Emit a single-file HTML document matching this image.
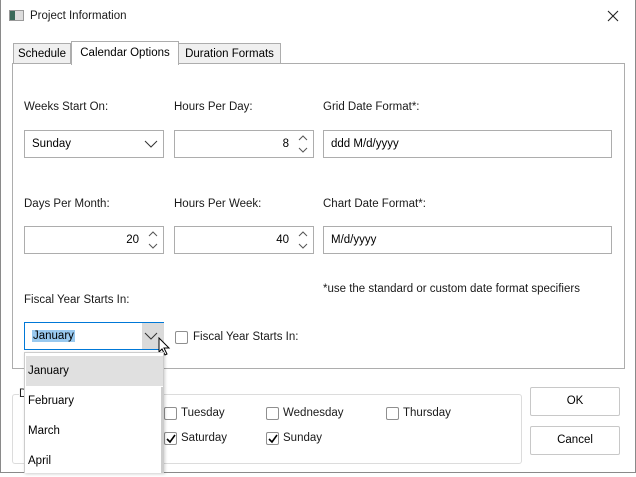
<!DOCTYPE html>
<html><head><style>
*{box-sizing:border-box;margin:0;padding:0}
body{width:636px;height:473px;background:#fff;font-family:"Liberation Sans",sans-serif;font-size:11.5px;color:#000;position:relative;overflow:hidden}
.a{position:absolute}
.win{left:0;top:0;width:636px;height:473px;border:1px solid #8a8a8a;border-top:none}
.lbl{position:absolute;font-size:11.5px;color:#1a1a1a}
.box{position:absolute;border:1px solid #adadad;background:#fff;height:28px}
.chk{position:absolute;width:13px;height:13px;border:1px solid #8f8f8f;border-radius:2px;background:#fff}
.btn{position:absolute;border:1px solid #c8c8c8;border-radius:2px;background:#fff;text-align:center;line-height:27px;font-size:11.5px}
.tab{position:absolute;border:1px solid #adadad;background:#f0f0f0;height:21px;top:43px;font-size:11.5px;text-align:center;line-height:20px}
.item{position:absolute;left:1px;width:137px;height:30px;line-height:31px;padding-left:2px}
</style></head><body>
<div class="a win"></div>
<div class="a" style="left:9px;top:10px;width:15px;height:11px;border:1px solid #999;background:linear-gradient(90deg,#3a6a5a 0 5px,#ddd 5px)"></div>
<div class="lbl" style="left:30px;top:10px">Project Information</div>
<svg class="a" style="left:607px;top:10px" width="12" height="12"><path d="M1 1L11 11M11 1L1 11" stroke="#222" stroke-width="1.1"/></svg>

<div class="a" style="left:12px;top:63px;width:613px;height:306px;border:1px solid #adadad"></div>
<div class="tab" style="left:13px;width:58px">Schedule</div>
<div class="tab" style="left:178px;width:103px">Duration Formats</div>
<div class="tab" style="left:71px;width:108px;top:41px;height:24px;background:#fff;border-bottom:none;line-height:23px">Calendar Options</div>

<div class="lbl" style="left:24px;top:101px">Weeks Start On:</div>
<div class="lbl" style="left:174px;top:101px">Hours Per Day:</div>
<div class="lbl" style="left:323px;top:101px">Grid Date Format*:</div>
<div class="box" style="left:24px;top:130px;width:140px"><span class="a" style="left:7px;top:7px">Sunday</span>
<svg class="a" style="left:119px;top:9px" width="14" height="9"><path d="M1 1L7 7L13 1" stroke="#333" fill="none"/></svg></div>
<div class="box" style="left:174px;top:130px;width:140px"><span class="a" style="right:24px;top:7px">8</span>
<svg class="a" style="left:123px;top:3px" width="10" height="20"><path d="M1 6L5 2L9 6M1 14L5 18L9 14" stroke="#555" fill="none"/></svg></div>
<div class="box" style="left:323px;top:130px;width:289px"><span class="a" style="left:7px;top:7px">ddd M/d/yyyy</span></div>

<div class="lbl" style="left:24px;top:198px">Days Per Month:</div>
<div class="lbl" style="left:174px;top:198px">Hours Per Week:</div>
<div class="lbl" style="left:323px;top:198px">Chart Date Format*:</div>
<div class="box" style="left:24px;top:226px;width:140px"><span class="a" style="right:24px;top:7px">20</span>
<svg class="a" style="left:123px;top:3px" width="10" height="20"><path d="M1 6L5 2L9 6M1 14L5 18L9 14" stroke="#555" fill="none"/></svg></div>
<div class="box" style="left:174px;top:226px;width:140px"><span class="a" style="right:24px;top:7px">40</span>
<svg class="a" style="left:123px;top:3px" width="10" height="20"><path d="M1 6L5 2L9 6M1 14L5 18L9 14" stroke="#555" fill="none"/></svg></div>
<div class="box" style="left:323px;top:226px;width:289px"><span class="a" style="left:7px;top:7px">M/d/yyyy</span></div>

<div class="lbl" style="left:323px;top:283px">*use the standard or custom date format specifiers</div>
<div class="lbl" style="left:24px;top:294px">Fiscal Year Starts In:</div>
<div class="box" style="left:24px;top:322px;width:140px;border-color:#0078d7"><span class="a" style="left:7px;top:7px;background:#99c9ef;padding:0 1px">January</span>
<div class="a" style="left:117px;top:0;width:22px;height:26px;background:#dadada"></div>
<svg class="a" style="left:119px;top:9px" width="14" height="9"><path d="M1 1L7 7L13 1" stroke="#333" fill="none"/></svg></div>
<svg class="a" style="left:158px;top:337px" width="13" height="19"><path d="M1 1L1 15L4 12L7 18L9 17L6 11L11 11Z" fill="#fff" stroke="#000"/></svg>
<div class="chk" style="left:175px;top:331px"></div>
<div class="lbl" style="left:193px;top:331px">Fiscal Year Starts In:</div>

<div class="a" style="left:12px;top:394px;width:510px;height:70px;border:1px solid #dcdcdc;border-radius:3px"></div>
<div class="lbl" style="left:19px;top:388px;background:#fff">D</div>
<div class="chk" style="left:164px;top:407px"></div><div class="lbl" style="left:181px;top:407px">Tuesday</div>
<div class="chk" style="left:266px;top:407px"></div><div class="lbl" style="left:283px;top:407px">Wednesday</div>
<div class="chk" style="left:386px;top:407px"></div><div class="lbl" style="left:403px;top:407px">Thursday</div>
<div class="chk" style="left:164px;top:432px"></div><svg class="a" style="left:166px;top:434px" width="10" height="10"><path d="M1 5L4 8L9 1" stroke="#000" stroke-width="1.6" fill="none"/></svg><div class="lbl" style="left:181px;top:432px">Saturday</div>
<div class="chk" style="left:266px;top:432px"></div><svg class="a" style="left:268px;top:434px" width="10" height="10"><path d="M1 5L4 8L9 1" stroke="#000" stroke-width="1.6" fill="none"/></svg><div class="lbl" style="left:283px;top:432px">Sunday</div>

<div class="btn" style="left:530px;top:387px;width:90px;height:29px">OK</div>
<div class="btn" style="left:530px;top:426px;width:90px;height:29px">Cancel</div>

<div class="a" style="left:24px;top:352px;width:140px;height:121px;background:#fff;border:1px solid #ccc;border-bottom:none;box-shadow:1px 1px 3px rgba(0,0,0,.2)">
<div class="item" style="top:3px;background:#e0e0e0;width:137px">January</div>
<div class="item" style="top:33px">February</div>
<div class="item" style="top:63px">March</div>
<div class="item" style="top:93px">April</div>
<div class="a" style="left:136px;top:34px;width:2px;height:86px;background:#cdcdcd"></div>
</div>
</body></html>
